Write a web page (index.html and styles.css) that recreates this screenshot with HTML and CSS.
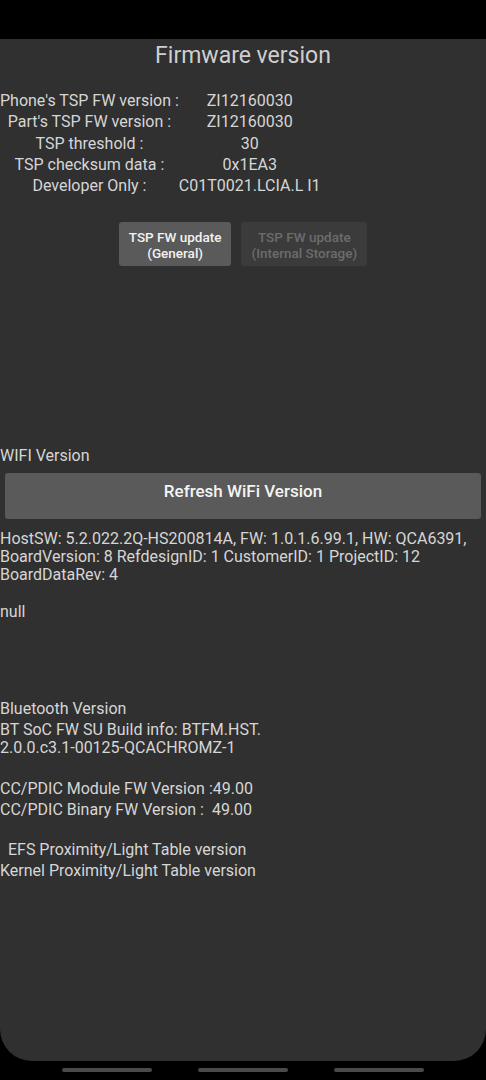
FILE: index.html
```html
<html lang="en">
<head>
<meta http-equiv="Content-Type" content="text/html; charset=utf-8"/>
<link rel="stylesheet" href="styles.css">
</head>
<body>
<div class="statusbar"></div>
<div class="screen">
    <div class="title">Firmware version</div>

    <table class="tsp">
        <tr><td class="lbl">Phone's TSP FW version :</td><td class="val">ZI12160030</td></tr>
        <tr><td class="lbl">Part's TSP FW version :</td><td class="val">ZI12160030</td></tr>
        <tr><td class="lbl">TSP threshold :</td><td class="val">30</td></tr>
        <tr><td class="lbl">TSP checksum data :</td><td class="val">0x1EA3</td></tr>
        <tr><td class="lbl">Developer Only :</td><td class="val">C01T0021.LCIA.L I1</td></tr>
    </table>

    <div class="btnrow">
        <div class="smallbtn">TSP FW update<br>(General)</div>
        <div class="smallbtn off">TSP FW update<br>(Internal Storage)</div>
    </div>

    <div class="wifilbl">WIFI Version</div>
    <div class="bigbtn">Refresh WiFi Version</div>
    <div class="info">HostSW: 5.2.022.2Q-HS200814A, FW: 1.0.1.6.99.1, HW: QCA6391, BoardVersion: 8 RefdesignID: 1 CustomerID: 1 ProjectID: 12 BoardDataRev: 4</div>
    <div class="null">null</div>

    <div class="bt">Bluetooth Version</div>
    <div class="info">BT SoC FW SU Build info: BTFM.HST.<br>2.0.0.c3.1-00125-QCACHROMZ-1</div>

    <div class="cc">CC/PDIC Module FW Version :49.00</div>
    <div class="line">CC/PDIC Binary FW Version :&nbsp; 49.00</div>

    <div class="efs">&nbsp; EFS Proximity/Light Table version</div>
    <div class="line">Kernel Proximity/Light Table version</div>
</div>
<div class="navbar">
    <span class="pill"></span><span class="pill"></span><span class="pill"></span>
</div>
</body>
</html>
```

FILE: styles.css
```css
body {
    margin: 0;
    background-color: #000;
    font-family: Roboto, "Noto Sans", sans-serif;
    color: #d6d6d6;
    font-size: 16px;
}
.statusbar {
    height: 39px;
}
.screen {
    background-color: #303030;
    height: 1022px;
    border-radius: 0 0 32px 32px;
}
.title {
    text-align: center;
    font-size: 23px;
    line-height: 26px;
    padding-top: 4px;
    color: #cfcfcf;
}
.tsp {
    border-collapse: collapse;
    margin-top: 21px;
    font-size: 16px;
}
.tsp td {
    padding: 0;
    height: 21.25px;
    line-height: 21px;
    text-align: center;
    white-space: nowrap;
}
.lbl {
    width: 178px;
}
.val {
    width: 140px;
}
.btnrow {
    display: flex;
    justify-content: center;
    gap: 10px;
    margin-top: 26px;
}
.smallbtn {
    background-color: #5a5a5a;
    color: #f2f2f2;
    font-size: 13.5px;
    font-weight: 500;
    line-height: 16px;
    text-align: center;
    height: 44px;
    box-sizing: border-box;
    padding: 7px 10px 0 10px;
    border-radius: 3px;
}
.off {
    background-color: #3b3b3b;
    color: #6c6c6c;
}
.wifilbl {
    margin-top: 180px;
    line-height: 20px;
}
.bigbtn {
    margin: 7px 5px 0 5px;
    height: 46px;
    line-height: 36px;
    background-color: #5a5a5a;
    border-radius: 3px;
    text-align: center;
    font-size: 17px;
    font-weight: 500;
    color: #f4f4f4;
}
.info {
    line-height: 18px;
}
.bigbtn + .info {
    margin-top: 11px;
}
.null {
    margin-top: 19px;
    line-height: 18px;
}
.bt {
    margin-top: 78px;
    line-height: 20px;
}
.bt + .info {
    margin-top: 2px;
}
.cc {
    margin-top: 21px;
    line-height: 21px;
}
.efs {
    margin-top: 19px;
    line-height: 21px;
}
.line {
    line-height: 21px;
}
.navbar {
    display: flex;
    justify-content: center;
    gap: 46px;
    padding-top: 7px;
}
.pill {
    width: 90px;
    height: 4px;
    border-radius: 2px;
    background-color: #4a4a4a;
}
```
